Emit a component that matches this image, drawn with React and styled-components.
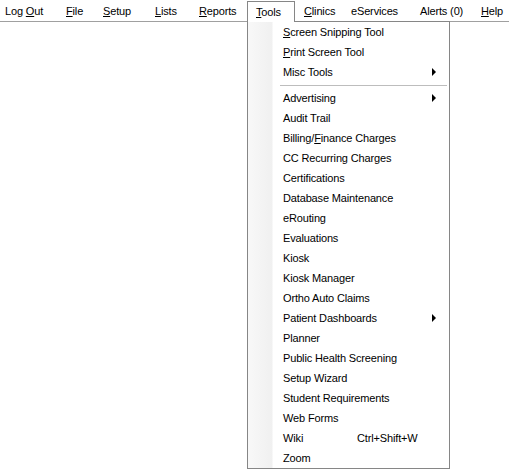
import React from "react";
import styled, { createGlobalStyle } from "styled-components";

const GlobalStyle = createGlobalStyle`
  html, body {
    margin: 0;
    padding: 0;
    background: #ffffff;
  }
  body {
    font-family: "Liberation Sans", Arial, sans-serif;
    font-size: 11px;
    letter-spacing: -0.15px;
    color: #000;
  }
`;

const Page = styled.div`
  position: relative;
  width: 509px;
  height: 471px;
  overflow: hidden;
`;

const MenuBar = styled.div`
  display: flex;
  align-items: stretch;
  height: 21px;
  border-bottom: 1px solid #a0a0a0;
`;

const BarItem = styled.div`
  position: relative;
  box-sizing: border-box;
  flex: 0 0 ${(p) => p.$w}px;
  padding-left: ${(p) => (p.$pad != null ? p.$pad : 9)}px;
  display: flex;
  align-items: center;
  white-space: nowrap;
  ${(p) =>
    p.$open &&
    `
    margin-top: 1px;
    padding-left: 8px;
    border: 1px solid #868686;
    border-bottom: none;
    margin-bottom: -1px;
    background: #fff;
    z-index: 3;
  `}
`;

const Text = styled.span`
  white-space: pre;
`;

const Key = styled.span`
  text-decoration: underline;
  text-underline-offset: 1px;
`;

const Dropdown = styled.div`
  position: absolute;
  left: 247px;
  top: 21px;
  width: 203px;
  box-sizing: border-box;
  border: 1px solid #868686;
  background: linear-gradient(to right, #f8f8f8 0, #f0f0f0 24px, #ffffff 25px);
  z-index: 2;
`;

const Item = styled.div`
  height: 20px;
  display: flex;
  align-items: center;
  padding-left: 35px;
  padding-right: 13px;
  white-space: nowrap;
`;

const Shortcut = styled.span`
  margin-left: auto;
  width: 79px;
`;

const Arrow = styled.span`
  margin-left: auto;
  width: 0;
  height: 0;
  border-top: 4px solid transparent;
  border-bottom: 4px solid transparent;
  border-left: 4px solid #000;
`;

const Separator = styled.div`
  height: 6px;
  display: flex;
  align-items: center;
  padding-left: 32px;
  padding-right: 2px;
  &::after {
    content: "";
    flex: 1;
    height: 1px;
    background: #bdbdbd;
    box-shadow: 0 1px 0 #fff;
  }
`;

const label = (text, key) => {
  if (key == null) return <Text>{text}</Text>;
  return (
    <Text>
      {text.slice(0, key)}
      <Key>{text[key]}</Key>
      {text.slice(key + 1)}
    </Text>
  );
};

const bar = [
  { t: "Log Out", k: 4, w: 57, pad: 5 },
  { t: "File", k: 0, w: 37 },
  { t: "Setup", k: 0, w: 52 },
  { t: "Lists", k: 0, w: 44 },
  { t: "Reports", k: 0, w: 57 },
  { t: "Tools", k: 0, w: 48, open: true },
  { t: "Clinics", k: 0, w: 47 },
  { t: "eServices", w: 69 },
  { t: "Alerts (0)", w: 61 },
  { t: "Help", k: 0, w: 37 },
];

const toolsTop = [
  { t: "Screen Snipping Tool", k: 0 },
  { t: "Print Screen Tool", k: 0 },
  { t: "Misc Tools", sub: true },
];

const toolsRest = [
  { t: "Advertising", sub: true },
  { t: "Audit Trail" },
  { t: "Billing/Finance Charges", k: 8 },
  { t: "CC Recurring Charges" },
  { t: "Certifications" },
  { t: "Database Maintenance" },
  { t: "eRouting" },
  { t: "Evaluations" },
  { t: "Kiosk" },
  { t: "Kiosk Manager" },
  { t: "Ortho Auto Claims" },
  { t: "Patient Dashboards", sub: true },
  { t: "Planner" },
  { t: "Public Health Screening" },
  { t: "Setup Wizard" },
  { t: "Student Requirements" },
  { t: "Web Forms" },
  { t: "Wiki", sc: "Ctrl+Shift+W" },
  { t: "Zoom" },
];

const renderItem = (it) => (
  <Item key={it.t}>
    {label(it.t, it.k)}
    {it.sc && <Shortcut>{it.sc}</Shortcut>}
    {it.sub && <Arrow />}
  </Item>
);

export default function App() {
  return (
    <Page>
      <GlobalStyle />
      <MenuBar>
        {bar.map((b) => (
          <BarItem key={b.t} $w={b.w} $pad={b.pad} $open={b.open}>
            {label(b.t, b.k)}
          </BarItem>
        ))}
      </MenuBar>
      <Dropdown>
        {toolsTop.map(renderItem)}
        <Separator />
        {toolsRest.map(renderItem)}
      </Dropdown>
    </Page>
  );
}
